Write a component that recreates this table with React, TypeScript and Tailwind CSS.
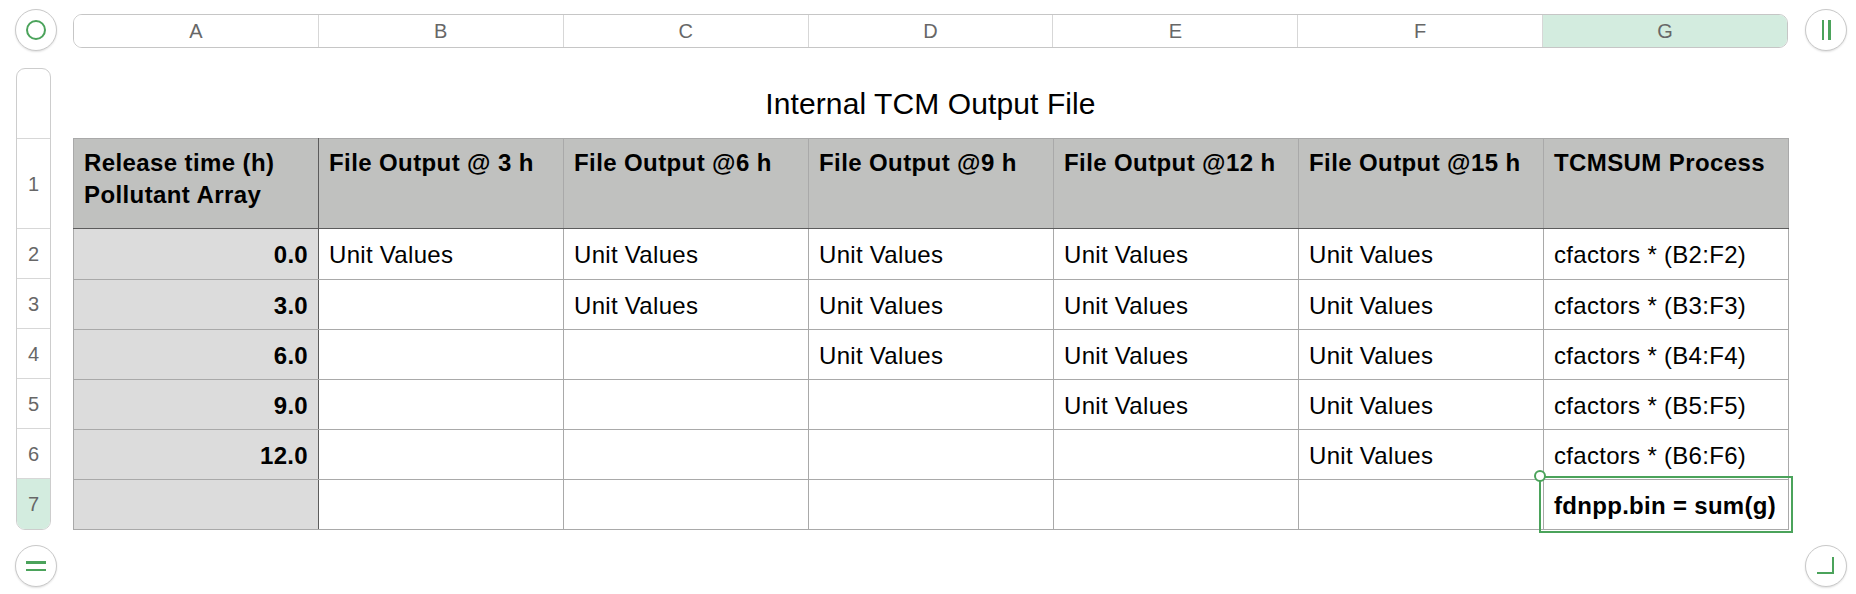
import React from "react";

function Circle({ children }: { children?: React.ReactNode }) {
  return (
    <div className="w-[42px] h-[42px] rounded-full border border-[#c9c9c9] bg-white shadow-[0_1px_2px_rgba(0,0,0,0.12)] flex items-center justify-center shrink-0">
      {children}
    </div>
  );
}

const cols = ["A", "B", "C", "D", "E", "F", "G"];
const headers = [
  "Release time (h)\nPollutant Array",
  "File Output @ 3 h",
  "File Output @6 h",
  "File Output @9 h",
  "File Output @12 h",
  "File Output @15 h",
  "TCMSUM Process",
];

const rows: { a: string; cells: string[]; g: string; bold?: boolean }[] = [
  { a: "0.0", cells: ["Unit Values", "Unit Values", "Unit Values", "Unit Values", "Unit Values"], g: "cfactors * (B2:F2)" },
  { a: "3.0", cells: ["", "Unit Values", "Unit Values", "Unit Values", "Unit Values"], g: "cfactors * (B3:F3)" },
  { a: "6.0", cells: ["", "", "Unit Values", "Unit Values", "Unit Values"], g: "cfactors * (B4:F4)" },
  { a: "9.0", cells: ["", "", "", "Unit Values", "Unit Values"], g: "cfactors * (B5:F5)" },
  { a: "12.0", cells: ["", "", "", "", "Unit Values"], g: "cfactors * (B6:F6)" },
  { a: "", cells: ["", "", "", "", ""], g: "fdnpp.bin = sum(g)", bold: true },
];

export default function App() {
  return (
    <div className="w-[1856px] h-[594px] bg-white flex flex-col font-['Liberation_Sans',Arial,sans-serif] text-black overflow-hidden">
      {/* top bar */}
      <div className="flex items-center h-[60px] pl-[15px]">
        <Circle>
          <div className="w-[20px] h-[20px] rounded-full border-[2.5px] border-[#4ba35b]" />
        </Circle>
        <div className="ml-[16px] mt-[2px] w-[1715px] h-[34px] rounded-[9px] border border-[#c6c6c6] flex overflow-hidden">
          {cols.map((c, i) => (
            <div
              key={c}
              className={
                "flex-1 flex items-center justify-center text-[20px] text-[#676767] " +
                (i < 6 ? "border-r border-[#d7d7d7] bg-white" : "bg-[#d3ecdf]")
              }
            >
              {c}
            </div>
          ))}
        </div>
        <div className="ml-[17px]">
          <Circle>
            <div className="flex gap-[4px]">
              <div className="w-[2.5px] h-[20px] bg-[#4ba35b]" />
              <div className="w-[2.5px] h-[20px] bg-[#4ba35b]" />
            </div>
          </Circle>
        </div>
      </div>

      {/* middle */}
      <div className="flex mt-[8px]">
        <div className="ml-[16px] w-[35px] h-[462px] rounded-[9px] border border-[#cdcdcd] flex flex-col overflow-hidden text-[20px] text-[#676767]">
          <div className="h-[70px] border-b border-[#d7d7d7] shrink-0" />
          <div className="h-[90px] border-b border-[#d7d7d7] flex items-center justify-center shrink-0">1</div>
          {[2, 3, 4, 5, 6].map((n) => (
            <div key={n} className="h-[50px] border-b border-[#d7d7d7] flex items-center justify-center shrink-0">
              {n}
            </div>
          ))}
          <div className="flex-1 bg-[#d3ecdf] flex items-center justify-center">7</div>
        </div>

        <div className="ml-[22px] w-[1715px] flex flex-col">
          <div className="h-[70px] flex items-center justify-center text-[30px] pt-[1px] tracking-[0.1px]">Internal TCM Output File</div>
          <div className="relative">
            <table className="border-collapse table-fixed w-[1715px]">
              <colgroup>
                {cols.map((c) => (
                  <col key={c} className="w-[245px]" />
                ))}
              </colgroup>
              <tbody>
                <tr className="h-[90px]">
                  {headers.map((h, i) => (
                    <td
                      key={i}
                      className={
                        "align-top bg-[#c0c1bf] border border-[#a9a9a9] border-b-[#5c5c5c] px-[10px] pt-[8px] text-[24px] leading-[32px] font-bold tracking-[0.4px] whitespace-pre-line " +
                        (i === 0 ? "border-r-[#5c5c5c]" : "")
                      }
                    >
                      {h}
                    </td>
                  ))}
                </tr>
                {rows.map((r, ri) => (
                  <tr key={ri} className={ri === 0 ? "h-[51px]" : "h-[50px]"}>
                    <td className="bg-[#dcdcdc] border border-[#a9a9a9] border-r-[#5c5c5c] px-[10px] pt-[2px] text-right font-bold text-[24px] tracking-[0.3px]">
                      {r.a}
                    </td>
                    {r.cells.map((c, ci) => (
                      <td key={ci} className="border border-[#a9a9a9] px-[10px] pt-[2px] text-[24px] tracking-[0.3px]">
                        {c}
                      </td>
                    ))}
                    <td
                      className={
                        "border border-[#a9a9a9] px-[10px] pt-[2px] text-[24px] tracking-[0.3px] " + (r.bold ? "font-bold" : "")
                      }
                    >
                      {r.g}
                    </td>
                  </tr>
                ))}
              </tbody>
            </table>
            {/* selection */}
            <div className="absolute left-[1466px] top-[338px] w-[254px] h-[57px] border-2 border-[#4ba35b] pointer-events-none" />
            <div className="absolute left-[1461px] top-[332px] w-[12px] h-[12px] rounded-full bg-white border-2 border-[#4ba35b]" />
          </div>
        </div>
      </div>

      {/* bottom */}
      <div className="flex items-center justify-between pl-[15px] pr-[9px] mt-[15px]">
        <Circle>
          <div className="flex flex-col gap-[5px]">
            <div className="w-[20px] h-[2.5px] bg-[#4ba35b]" />
            <div className="w-[20px] h-[2.5px] bg-[#4ba35b]" />
          </div>
        </Circle>
        <Circle>
          <div className="w-[17px] h-[17px] border-r-[2.5px] border-b-[2.5px] border-[#4ba35b] ml-[-2px] mt-[-2px]" />
        </Circle>
      </div>
    </div>
  );
}
